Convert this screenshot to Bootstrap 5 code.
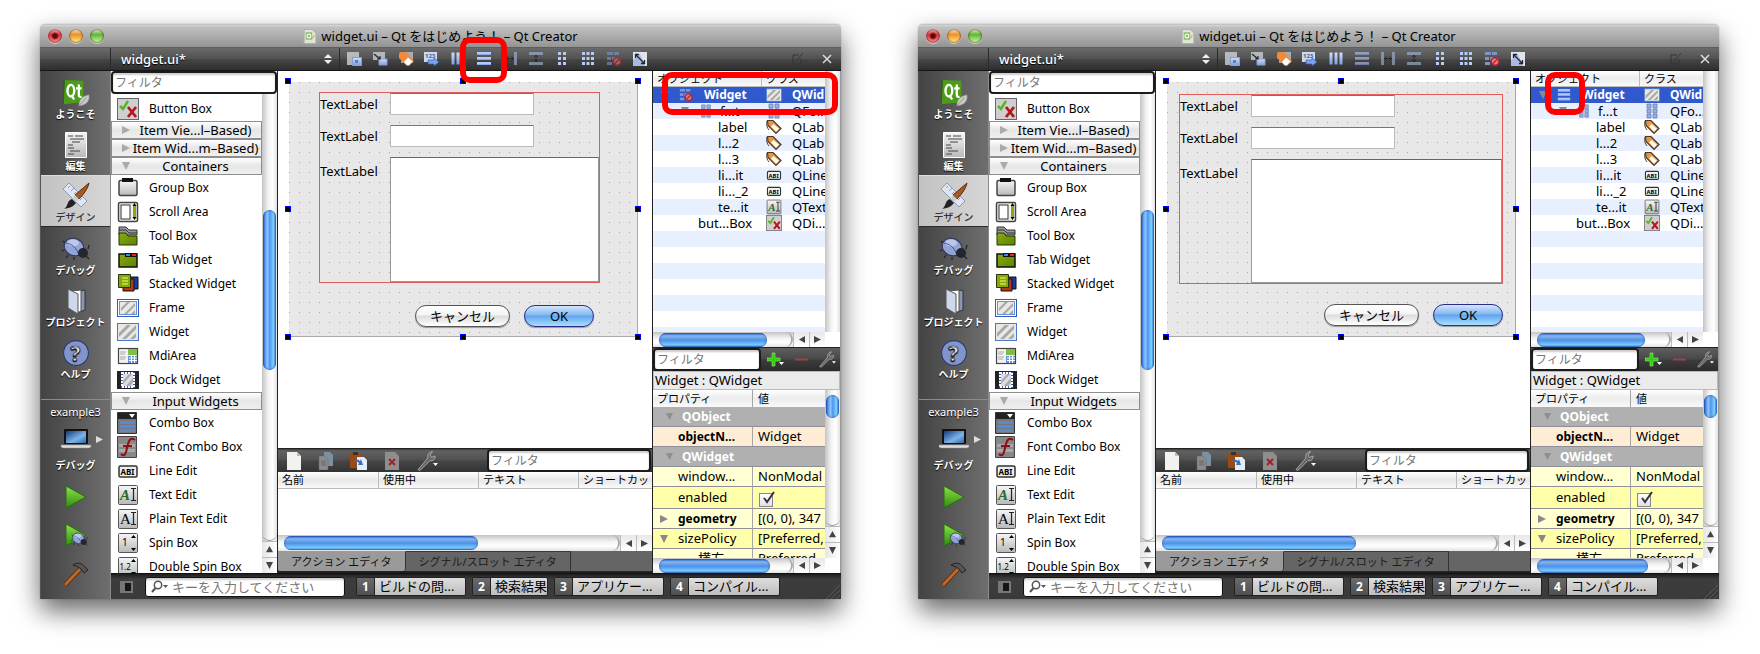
<!DOCTYPE html>
<html lang="ja">
<head>
<meta charset="utf-8">
<meta name="viewport" content="width=device-width, initial-scale=1">
<title>widget.ui - Qt Creator</title>
<link href="https://cdn.jsdelivr.net/npm/bootstrap@5.3.0/dist/css/bootstrap.min.css" rel="stylesheet">
<style>
body{font-family:"Noto Sans","Noto Sans CJK JP",sans-serif;font-size:12px;line-height:16px;color:#000;background:#fff;overflow:hidden}
.desk{padding:24px 41px 55px 40px;gap:77px;height:100vh}
.win{flex:1 1 0;min-width:0;border-radius:5px 5px 0 0;box-shadow:0 12px 26px rgba(0,0,0,.6),0 0 1px rgba(0,0,0,.5);background:#fff}
button,select,input,textarea{font:inherit;color:inherit;padding:0;border:0;background:none;border-radius:0}
svg{display:block;flex:none}
.titlebar{height:23px;font-size:13px;background:linear-gradient(#d6d6d6,#c0c0c0 10%,#949494);border-radius:5px 5px 0 0;border-top:1px solid #c4c4c4}
.lights{left:8px;top:4px;gap:7px}
.light{width:14px;height:14px;border-radius:50%;box-shadow:0 1px 0 #ccc,inset 0 0 1px 1px rgba(60,0,0,.4)}
.light.r{background:radial-gradient(circle at 50% 50%,#5b0a0d 0 2px,transparent 4px),linear-gradient(#f7b4b4,#dc353b 40%,#ff8e8a)}
.light.y{background:linear-gradient(#fdebc8,#ea922c 40%,#fff08a)}
.light.g{background:linear-gradient(#e0f6d0,#62b43a 40%,#ccffa0)}
.toolbar{height:24px;background:linear-gradient(#6a6a6a,#525252 48%,#464646 52%,#2e2e2e);border-bottom:1px solid #161616;border-top:1px solid #5e5e5e}
.corner{width:71px;border-right:1px solid #2a2a2a}
.filesel{appearance:none;color:#fff;font-size:13px;font-weight:500;padding-left:10px;text-shadow:0 1px 1px #000;line-height:22px}
.tools{gap:10px;padding-left:6px;border-left:1px solid #2a2a2a;margin-left:7px}
.modes{width:71px;background:linear-gradient(90deg,#434343,#6e6e6e);border-right:1px solid #8a8a8a;border-left:1px solid #555}
.mode{height:52px;color:#fff;font-size:10px;font-weight:700;line-height:14px;padding-bottom:2px;text-shadow:0 1px 1px #000;white-space:nowrap}
.mode.on{background:linear-gradient(90deg,#c2c2c2,#d6d6d6);color:#333;font-weight:500;text-shadow:none;border-top:1px solid #ddd;border-bottom:1px solid #2b2b2b}
.kit{border-top:1px solid #8b8b8b;margin-top:16px;color:#fff;font-size:11px;text-shadow:0 1px 1px #000}
.kit .lab{font-size:10px;font-weight:700;line-height:14px}
.wbox{width:167px;border-right:1px solid #222}
.filter{height:23px;border:2px solid #1c1c1c;border-radius:4px;background:#fff;font-size:12px;padding-left:2px;min-width:0;box-shadow:inset 0 2px 2px #ccc}
.filter::placeholder,.locator::placeholder{color:#777;opacity:1}
.items{overflow:hidden;padding-top:3px}
.item{height:24px;gap:10px;padding-left:6px;white-space:nowrap;width:100%}
.cat{height:18px;border:1px solid #8e8e8e;background:linear-gradient(#fff,#e6e6e6 50%,#efefef);font-size:13px;white-space:nowrap;line-height:16px;width:100%}
.cat .tri{width:18px;flex:none}
.cat.opened{margin-bottom:1px}
.vbar{width:15px;background:linear-gradient(90deg,#c4c4c4,#f2f2f2 40%,#fff 70%,#e2e2e2);flex:none}
.vthumb{border-radius:7px;margin:0 1px;background:linear-gradient(90deg,#1d55c0,#5c9dec 18%,#8cc4fb 35%,#4f96ee 52%,#7fd0ff 80%,#2c6cc6);box-shadow:inset 0 0 2px #123a9c}
.vbtn{height:16px;border-top:1px solid #bbb;background:linear-gradient(90deg,#e6e6e6,#fff);font-size:0}
.vtrack{border-radius:0 0 8px 8px;border-bottom:1px solid #999;min-height:0}
.hbar{height:16px;background:linear-gradient(#c4c4c4,#f2f2f2 40%,#fff 70%,#e2e2e2);flex:none}
.dock .hbar{height:15px}
.htrack{border-radius:0 8px 8px 0;border-right:2px solid #aaa;padding-left:6px}
.hthumb{border-radius:7px;height:14px;background:linear-gradient(#1f58c4,#86b4ee 20%,#5a9bea 45%,#4890ea 50%,#7ecbff 85%,#3a78c8);box-shadow:inset 0 0 2px #123a9c}
.hbtn{width:16px;border-left:1px solid #bbb;background:linear-gradient(#e8e8e8,#fff)}
.canvas{padding:11px 14px 0 11px;background:#fff}
.form{height:255px;background:radial-gradient(circle at .5px .5px,#a4a4a4 .8px,transparent .9px) 0 0/10px 10px #e8e8e8;border-right:1px solid #aaa;border-bottom:1px solid #aaa;font-size:13px}
.lay{display:grid;grid-template-columns:71px 1fr;grid-template-rows:22px 22px 1fr;row-gap:10px;border:1px solid #e05c5c}
.a .lay{margin:10px 37px 0 30px;height:191px}
.b .lay{margin:12px 12px 0 12px;height:190px}
.a .lay{grid-template-columns:70px 1fr}
.lay input{width:144px;height:22px;background:#fff;border:1px solid #bbb;border-top-color:#777}
.lay textarea{background:#fff;border:1px solid #999;border-top-color:#666;resize:none;width:100%;height:100%}
.lay label{line-height:22px}
.lay label.t{padding-top:3px}
.pill{height:22px;border-radius:11px;border:1px solid #555;background:linear-gradient(#fff,#f4f4f4 45%,#dcdcdc 50%,#fff);box-shadow:0 1px 1px #999;line-height:19px}
.cancel{width:95px}
.ok{width:70px;background:linear-gradient(#d4e6fb,#84b8f2 45%,#5fa5ee 50%,#a8e0ff);border-color:#2b2b8c}
.btns{gap:14px}
.a .btns{margin:22px 43px 0 0}
.b .btns{margin:20px 12px 0 0}
.grips{position:absolute;inset:-1px -1px -1px -1px;pointer-events:none}
.hd{width:6px;height:6px;background:#000;border:1px solid #00f;position:absolute;transform:translate(-50%,-50%)}
.abar{height:24px;background:linear-gradient(#3a3a3a,#626262 8%,#505050 48%,#454545 52%,#333);border-top:1px solid #222;gap:16px;padding:0 1px 0 8px}
.abar .filter{width:164px}
.ahead{height:17px;background:linear-gradient(#fff,#e8e8e8 50%,#fafafa);border-bottom:1px solid #bbb;font-size:11px;line-height:16px}
.ahead th{font-weight:400;padding:0 0 0 4px;border-left:1px solid #bbb;overflow:hidden;white-space:nowrap}
.ahead th:first-child{border-left:0}
table{table-layout:fixed;width:100%;border-collapse:separate;border-spacing:0}
.etabs{height:22px;background:#656565;font-size:11px;border-bottom:2px solid #222;color:#1c1c1c}
.etabs button{padding:0 13px;border-right:1px solid #333;border-top:1px solid #3a3a3a;line-height:18px;white-space:nowrap}
.etabs .on{background:#9a9a9a;border-radius:0 0 3px 3px;color:#111;border-top-color:#9a9a9a}
.dock{width:189px;border-left:1px solid #222;border-right:1px solid #999;flex:none}
.tree{height:261px;overflow:hidden;background:repeating-linear-gradient(#e8f0ff 0 16px,#fff 16px 32px)}
.tree th{height:16px;font-weight:400;font-size:11px;padding:0 0 0 4px;background:linear-gradient(#fff,#ececec 50%,#fafafa);border-bottom:1px solid #bbb;line-height:15px}
.tree th+th{border-left:1px solid #bbb}
.tree td{height:16px;padding:0;white-space:nowrap;overflow:hidden;font-size:13px;line-height:16px}
.tree .sel td{background:#3059cd;color:#fff;font-weight:700;font-size:12px}
.tree .klass{gap:9px;padding-left:4px}
.pbar{height:24px;background:linear-gradient(#5e5e5e,#484848 48%,#3c3c3c 52%,#2c2c2c);border-top:1px solid #222;gap:6px;padding-right:4px}
.pbar .filter{width:108px}
.cls{height:19px;background:#ebebeb;border:1px solid #bbb;font-size:13px;padding-left:1px;line-height:17px}
.props{overflow:hidden;min-height:0}
.props th,.props td{padding:0;white-space:nowrap;overflow:hidden;font-size:13px;line-height:19px;height:20px;border-bottom:1px solid #8f8f98}
.props th.h{font-size:11px;font-weight:400;height:17px;line-height:16px;padding-left:4px;background:linear-gradient(#fff,#ececec 50%,#fafafa);border-bottom:0}
.props td+td,.props th.h+th{border-left:1px solid #a5a5a5;padding-left:5px}
.props .grp td{background:#b0b0b0;color:#fff;font-weight:700;font-size:12px}
.props .l td{background:#ffffd2}.props .d td{background:#ffffaa}.props .o td{background:#ffecd5}
.props .b2{font-weight:700;font-size:12px}
.props .tall td{height:22px}
.chk{width:14px;height:14px;appearance:none;border:1px solid #888;background:linear-gradient(#fff,#e0e0e0);margin:3px 0 0 1px;position:relative;vertical-align:top}
.chk+svg{margin:-18px 0 0 3px;position:relative}
.status{height:26px;background:linear-gradient(#1e1e1e,#3d3d3d 20%,#3a3a3a);border-top:1px solid #111;padding:0 1px 0 9px;gap:6px}
.locbox{width:200px;height:20px;background:#fff;border:1px solid #111;border-radius:3px;padding-left:5px;box-shadow:inset 0 2px 2px #ccc;margin:0 5px 0 6px}
.locator{font-size:13px;min-width:0;line-height:18px}
.out{height:19px;border:1px solid #222;border-radius:2px;font-size:13px;line-height:17px;background:linear-gradient(#dedede,#bebebe);white-space:nowrap}
.out b{width:18px;background:linear-gradient(#6a6a6a,#505050);color:#fff;border-right:1px solid #222;font-size:12px}
.ring{position:absolute;border:6px solid #f00;border-radius:10px;z-index:5;pointer-events:none}
.ring.tb{inset:-14px -15px -16px -16px}
.a .ring.tr{left:9px;right:2px;top:1px;height:43px}
.b .ring.tr{left:14px;width:40px;top:1px;height:43px}
</style>
</head>
<body>
<svg width="0" height="0" class="position-absolute">
<defs>
<linearGradient id="gb" x2="0" y2="1"><stop stop-color="#cfe0fb"/><stop offset="1" stop-color="#7f9de0"/></linearGradient>
<linearGradient id="gg" x2="0" y2="1"><stop stop-color="#f6f6f6"/><stop offset="1" stop-color="#b8b8b8"/></linearGradient>
<linearGradient id="gr" x2="0" y2="1"><stop stop-color="#8fe04a"/><stop offset="1" stop-color="#2f8c10"/></linearGradient>
<linearGradient id="go" x2="1" y2="1"><stop stop-color="#8aab10"/><stop offset="1" stop-color="#5c8200"/></linearGradient>
<linearGradient id="gs" x2="1" y2="1"><stop stop-color="#123a78"/><stop offset=".6" stop-color="#7db4e6"/><stop offset="1" stop-color="#2b66ac"/></linearGradient>
<symbol id="doc" viewBox="0 0 12 14"><path d="M.5.5h8l3 3v10H.5z" fill="#dfe4d8" stroke="#b0b0b0"/><rect x="2" y="3" width="6" height="7" fill="#8fc070"/><circle cx="5" cy="6.500" r="1.800" fill="none" stroke="#fff"/><path d="M7 10l3-4" stroke="#d8b060" stroke-width="1.200"/></symbol>
<symbol id="spin" viewBox="0 0 8 12"><path d="M0 5l4-4 4 4zM0 7h8l-4 4z" fill="#eee"/></symbol>
<symbol id="t0" viewBox="0 0 16 16"><path d="M1 1h12v5H6v8H1z" fill="#d5d9e0" opacity=".75"/><path d="M6.500 6.500h9v8h-9z" fill="url(#gb)" stroke="#8aa0d0"/><path d="M9 9h3v3H9z" fill="#5f7cc8"/></symbol>
<symbol id="t1" viewBox="0 0 16 16"><path d="M1 1h12v8H1z" fill="#c9cdd4" opacity=".8"/><path d="M7 8h8v6H7z" fill="url(#gb)" stroke="#8aa0d0"/><path d="M2 3l6 5M8 5v3H5" stroke="#222" fill="none" stroke-width="1.200"/></symbol>
<symbol id="t2" viewBox="0 0 16 16"><path d="M3 1h12v11H3z" fill="#c9cdd4" opacity=".7"/><path d="M1 3l1-2h6l8 9-5 5H9L1 7z" fill="#f08a3c"/><path d="M10 6.500l4.500 4-3.500 3.500H8.500L6 11z" fill="#fff"/></symbol>
<symbol id="t3" viewBox="0 0 16 16"><path d="M0 1h13v10H0z" fill="#cfd8e8"/><text x="1" y="7" font-size="6" font-weight="700" fill="#4462a8">123</text><path d="M4 9h6V7l5 4-5 4v-2H4z" fill="#7ba4f0" stroke="#3459b0" stroke-width=".7"/></symbol>
<symbol id="cols" viewBox="0 0 16 16"><path d="M1.500 1.500h3v12h-3zM6.500 1.500h3v12h-3zM11.500 1.500h3v12h-3z" fill="url(#gb)"/></symbol>
<symbol id="rows" viewBox="0 0 16 16"><path d="M1 1h14v3H1zM1 6h14v3H1zM1 11h14v3H1z" fill="#b4cbfa"/><path d="M1 3h14v1H1zM1 8h14v1H1zM1 13h14v1H1z" fill="#8aa6e4"/></symbol>
<symbol id="t6" viewBox="0 0 16 16"><path d="M1 1h3v13H1zM12 1h3v13h-3z" fill="#a4b8e0"/><path d="M4 7.500h8M6.500 5.500L4.500 7.500l2 2M9.500 5.500l2 2-2 2" stroke="#111" fill="none"/></symbol>
<symbol id="t7" viewBox="0 0 16 16"><path d="M1 1h14v3H1zM1 11h14v3H1z" fill="#a4b8e0"/><path d="M8 4v7M6 6l2-2 2 2M6 9l2 2 2-2" stroke="#111" fill="none"/></symbol>
<symbol id="t8" viewBox="0 0 16 16"><path d="M4 1h3v3H4zM9 1h3v3H9zM4 6h3v3H4zM9 6h3v3H9zM4 11h3v3H4zM9 11h3v3H9z" fill="#b4cbfa"/></symbol>
<symbol id="fl" viewBox="0 0 16 16"><path d="M3 1h4v4H3zM9 1h4v4H9zM3 6h4v4H3zM9 6h4v4H9zM3 11h4v4H3zM9 11h4v4H9z" fill="#98b0e4" stroke="#6a7fae" stroke-width=".8"/></symbol>
<symbol id="t9" viewBox="0 0 16 16"><path d="M2 1h3v3H2zM6.500 1h3v3h-3zM11 1h3v3h-3zM2 6h3v3H2zM6.500 6h3v3h-3zM11 6h3v3h-3zM2 11h3v3H2zM6.500 11h3v3h-3zM11 11h3v3h-3z" fill="#b4cbfa"/></symbol>
<symbol id="brk" viewBox="0 0 16 16"><path d="M1 1h6v3H1zM8 1h5v3H8zM1 6h4v3H1zM6 6h4v3H6zM1 11h5v3H1z" fill="#7f94cc"/><circle cx="11" cy="10.500" r="3.800" fill="#c88" stroke="#c22030" stroke-width="1.600"/><path d="M8.500 13l5-5" stroke="#c22030" stroke-width="1.500"/></symbol>
<symbol id="t11" viewBox="0 0 16 16"><path d="M1 1h14v14H1z" fill="#a9bbe0"/><path d="M7 1h8v14h-2z" fill="#e0e4ea"/><path d="M1 1h9L1 9z" fill="#dce6fa"/><path d="M3.500 3.500l9 9M3.500 7V3.500H7M12.500 9v3.500H9" stroke="#223" fill="none" stroke-width="1.300"/></symbol>
<symbol id="bb" viewBox="0 0 22 22"><rect x=".5" y=".5" width="21" height="21" fill="#cfcfcf" stroke="#666"/><path d="M3 8l3 3 5-8" stroke="#58b52c" stroke-width="2.500" fill="none"/><path d="M11 9l8 10M19 9l-8 10" stroke="#b3161c" stroke-width="2.800"/></symbol>
<symbol id="gbx" viewBox="0 0 22 22"><rect x="2" y="3.500" width="18" height="15" rx="1.500" fill="url(#gg)" stroke="#444" stroke-width="1.500"/><path d="M5 1h11v4H5z" fill="#111"/></symbol>
<symbol id="sca" viewBox="0 0 22 22"><rect x="1.500" y="1.500" width="19" height="19" rx="1.500" fill="#f0f0f0" stroke="#444" stroke-width="1.500"/><rect x="4" y="4" width="9" height="14" fill="#fff" stroke="#333"/><path d="M16 5h3v11h-3z" fill="#84a81a"/><path d="M15.500 5l2-3 2 3zM15.500 16l2 3 2-3z"/></symbol>
<symbol id="tbx" viewBox="0 0 22 22"><path d="M2 2h7l3 3h8v5H2z" fill="#999" stroke="#333"/><path d="M2 5h7l3 3h8" fill="none" stroke="#333"/><path d="M2 8h7l2 3h9v9H2z" fill="url(#go)" stroke="#26350a"/></symbol>
<symbol id="tab" viewBox="0 0 22 22"><path d="M2 5h18v13H2z" fill="url(#go)" stroke="#111" stroke-width="1.500"/><path d="M8 4h12v4H8z" fill="#111"/><path d="M9 5h4v2H9z" fill="#38f"/><path d="M15 5h4v2h-4z" fill="#e22"/></symbol>
<symbol id="stk" viewBox="0 0 22 22"><path d="M10 4h11v12H10z" fill="#1c3ca0" stroke="#111"/><path d="M6 6h11v12H6z" fill="#b03a10" stroke="#111"/><path d="M1.500 1.500h12v13h-12z" fill="#86a80c" stroke="#26350a"/><path d="M5 5h6M5 8h6M5 11h6" stroke="#ef6"/></symbol>
<symbol id="frm" viewBox="0 0 22 22"><rect x=".5" y="2.500" width="21" height="17" fill="#fff" stroke="#2e5cb8"/><rect x="2.500" y="4.500" width="17" height="13" fill="#e8e8e4" stroke="#6a90d8"/><path d="M4 11l6-6h3L4 14zM7 17L18 6v3l-8 8zM14 17l4-4v4z" fill="#a8a8a4"/></symbol>
<symbol id="wg" viewBox="0 0 22 22"><rect x=".5" y="2.500" width="21" height="17" fill="#e8e8e4" stroke="#4a78c8"/><path d="M2 12l8-8h4L2 16zM5 18L19 4v4L9 18zM13 18l6-6v4l-2 2z" fill="#a8a8a4"/></symbol>
<symbol id="mdi" viewBox="0 0 22 22"><rect x="1.500" y="3.500" width="19" height="15" fill="#f2f2f2" stroke="#444" stroke-width="1.200"/><path d="M11 4h9v6h-9z" fill="#7fbc4a"/><path d="M11 11h9v7h-9z" fill="#6a90d8"/><path d="M12 13h8M12 15.500h8M14.500 11v7M17.500 11v7" stroke="#fff"/><path d="M3 7h6M3 9h5M3 12h6M3 14h5" stroke="#aaa"/></symbol>
<symbol id="dck" viewBox="0 0 22 22"><path d="M0 2h22v18H0z" fill="#222"/><rect x="5" y="4" width="12" height="14" fill="#ddd" stroke="#3b62b8" stroke-width="2"/><rect x="5" y="4" width="12" height="14" fill="none" stroke="#fff" stroke-width="2" stroke-dasharray="2 1"/><path d="M6 12l6-7h3L6 15zM9 17l7-8v4l-3 4z" fill="#aaa"/></symbol>
<symbol id="cmb" viewBox="0 0 22 22"><path d="M.5.5h19v21H.5z" fill="#777" stroke="#333"/><path d="M1 1h18v6H1z" fill="#222"/><path d="M12 2h6l-3 4z" fill="#fff"/><path d="M3 9h15v3H3zM3 13h15v3H3zM3 17h15v3H3z" fill="#5c88cc"/></symbol>
<symbol id="fcb" viewBox="0 0 22 22"><path d="M.5.5h19v21H.5z" fill="#888" stroke="#444"/><path d="M2 8h16v3H2zM2 13h16v3H2z" fill="#aaa"/><path d="M18 4c-4-3-6 0-7 4l-2 8c-1 4-3 4-5 2M6 10h9" fill="none" stroke="#8c0f14" stroke-width="2"/></symbol>
<symbol id="led" viewBox="0 0 22 22"><rect x="2" y="6" width="18" height="11" rx="1.500" fill="#eee" stroke="#333" stroke-width="1.500"/><text x="3.500" y="14.500" font-size="8" font-weight="700">ABI</text></symbol>
<symbol id="ted" viewBox="0 0 22 22"><rect x="1.500" y="1.500" width="19" height="19" rx="1" fill="url(#gg)" stroke="#555"/><text x="3" y="16" font-size="15" font-family="Liberation Serif,serif" font-style="italic" font-weight="700" fill="#2c6a2c">A</text><path d="M14 4.500h5M14 16.500h5M16.500 5v11" stroke="#222" stroke-width="1.200"/></symbol>
<symbol id="ped" viewBox="0 0 22 22"><rect x="1.500" y="1.500" width="19" height="19" rx="1" fill="url(#gg)" stroke="#555"/><text x="3" y="16" font-size="15" font-family="Liberation Serif,serif">A</text><path d="M14 4.500h5M14 16.500h5M16.500 5v11" stroke="#222" stroke-width="1.200"/></symbol>
<symbol id="sp1" viewBox="0 0 22 22"><rect x="1.500" y="1.500" width="19" height="19" rx="1" fill="url(#gg)" stroke="#555"/><text x="5" y="14" font-size="10">1</text><path d="M14 6l2.500-3L19 6zM14 16l2.500 3 2.500-3z"/></symbol>
<symbol id="sp2" viewBox="0 0 22 22"><rect x="1.500" y="1.500" width="19" height="19" rx="1" fill="url(#gg)" stroke="#555"/><text x="2.500" y="14" font-size="8">1.2</text><path d="M14 6l2.500-3L19 6zM14 16l2.500 3 2.500-3z"/></symbol>
<symbol id="lbl" viewBox="0 0 16 16"><path d="M1.500 1.500h5.500l8 8-5 5-8-8z" fill="#e8953c" stroke="#4a3a2a" stroke-width="1.200"/><path d="M7.500 5L13 9.700 10 12.700 5 7.500z" fill="#fff"/><path d="M1 2c-1 3 0 7 2 9" fill="none" stroke="#444"/></symbol>
<symbol id="qt" viewBox="0 0 30 30"><path d="M3 1l20 1v23L1 27z" fill="#4c9c18"/><path d="M3 1L1 3v23l1 1z" fill="#2c640c"/><ellipse cx="9.500" cy="12.500" rx="3.600" ry="6.200" fill="none" stroke="#fff" stroke-width="2.600"/><path d="M10 17l3 5M18 6v11c0 2 1 2.500 3 2M15 10h6" fill="none" stroke="#fff" stroke-width="2.400"/><path d="M18 29c0-7 4-11 11-12 1 7-3 11-11 12z" fill="#c9c9c9" stroke="#888" stroke-width=".6"/><path d="M18 29l8-9" stroke="#777" stroke-width=".7"/></symbol>
<symbol id="ed" viewBox="0 0 26 28"><path d="M2.500 1.500h21v25h-21z" fill="url(#gg)" stroke="#fff"/><path d="M5 5h5M12 5h8M7 8h14M9 11h8M5 14h5M5 17h6M7 20h10M5 23h6" stroke="#444"/></symbol>
<symbol id="ds" viewBox="0 0 30 28"><path d="M2 7l6-6 18 18-6 6z" fill="#dfe6f2" stroke="#8e9ab4"/><path d="M7 6l2-2M10 9l3-3M13 12l2-2M16 15l3-3M19 18l2-2" stroke="#8e9ab4"/><path d="M28 1L14 13l4 4C23 12 27 6 28 1z" fill="#a85a1e" stroke="#5c2c0a"/><path d="M14 13l4 4-3 3-4-3z" fill="#ccc"/><path d="M11 17l4 4c-3 4-7 5-12 6 4-2 3-9 8-10z" fill="#222"/></symbol>
<symbol id="bug" viewBox="0 0 30 28"><path d="M4 8l-2-2M3 15l-2 1M7 20l-2 3M13 22v3M27 14l1-4M25 21l3 3" stroke="#222" stroke-width="1.200"/><ellipse cx="13" cy="12" rx="10" ry="8.500" transform="rotate(25 13 12)" fill="#92a3d6" stroke="#27335c"/><ellipse cx="12" cy="8" rx="6" ry="3.500" fill="#c6d0f0" opacity=".8"/><path d="M5 8c5 1 11 4 13 13" stroke="#27335c" fill="none" stroke-width=".7"/><ellipse cx="22" cy="18" rx="5" ry="5" fill="#23262e"/></symbol>
<symbol id="prj" viewBox="0 0 26 28"><path d="M9 5l13-2v20l-8 3z" fill="#8a95b4" stroke="#333"/><path d="M7 4l11-1v21l-6 3z" fill="#fff" stroke="#555"/><path d="M5 2l10 5v20L5 21z" fill="#cfd7ea" stroke="#555"/></symbol>
<symbol id="hlp" viewBox="0 0 26 26"><circle cx="13" cy="13" r="11.500" fill="#8294cc" stroke="#2c3a6a"/><text x="8" y="20" font-size="19" font-weight="700" fill="#fff" stroke="#333" stroke-width=".5">?</text></symbol>
<symbol id="lap" viewBox="0 0 32 22"><rect x="4" y="1" width="24" height="15" rx="1" fill="#111"/><rect x="6" y="3" width="20" height="12" fill="url(#gs)"/><path d="M1 17h30v2l-2 1H3l-2-1z" fill="#ddd" stroke="#888" stroke-width=".5"/></symbol>
<symbol id="run" viewBox="0 0 26 26"><path d="M3 2l20 11L3 24z" fill="url(#gr)" stroke="#2a6a10"/></symbol>
<symbol id="ham" viewBox="0 0 28 28"><path d="M3 25L19 8" stroke="#5a2808" stroke-width="4.500"/><path d="M3 25L19 8" stroke="#c0682c" stroke-width="2.800"/><path d="M11 5c5-3 9-2 12 2l3 3-4 3-3-4-3-2z" fill="#555" stroke="#222"/></symbol>
<symbol id="newf" viewBox="0 0 16 18"><path d="M1 0h10l4 4v14H1z" fill="#f2f2ee"/><path d="M11 0v4h4z" fill="#bbb"/></symbol>
<symbol id="cpy" viewBox="0 0 16 18"><path d="M6 0h6l3 3v11H6z" fill="#7c8fa4"/><path d="M1 4h6l3 3v11H1z" fill="#8c8c8c" stroke="#666" stroke-width=".5"/><path d="M3 9h5M3 11h5M3 13h5" stroke="#666"/></symbol>
<symbol id="pst" viewBox="0 0 18 18"><path d="M0 1h11v15H0z" fill="#9a4a10"/><path d="M3 0h5v3H3z" fill="#333"/><path d="M7 5h7l3 3v10H7z" fill="#e4ecf6"/><path d="M3 11c2-4 5-4 7-2l1-2 2 6-5 0 1-2c-2-2-4-1-6 0z" fill="#3b6ec0"/></symbol>
<symbol id="del" viewBox="0 0 16 18"><path d="M1 0h10l4 4v14H1z" fill="#8e8e8c"/><path d="M5 7l6 6M11 7l-6 6" stroke="#9c2430" stroke-width="2"/></symbol>
<symbol id="wr" viewBox="0 0 22 20"><path d="M2 18.500L12 7c-1-3 1-6 4.500-6.500L14 4l1.500 2.500L19 5c.5 3-2 5.500-5 4.500L4 19.500z" fill="#666" stroke="#bbb" stroke-width=".8"/><path d="M17 12h5l-2.500 3z" fill="#fff"/></symbol>
<symbol id="pls" viewBox="0 0 18 16"><path d="M5 1h3v5h5v3H8v5H5V9H0V6h5z" fill="#38c818" stroke="#8ff06a" stroke-width=".6"/><path d="M12 10h5l-2.500 3z" fill="#fff"/></symbol>
</defs></svg>
<main class="desk d-flex" id="desk"></main>
<script>
const ic=(n,w,h=w,o='')=>`<svg width="${w}" height="${h}" aria-hidden="true"${o}><use href="#${n}"/></svg>`;
const tri=(d,c='#999',s=8)=>({r:`<svg width="${s}" height="${s}" viewBox="0 0 8 8"><path d="M0 0l8 4-8 4z" fill="${c}"/></svg>`,d:`<svg width="${s}" height="${s}" viewBox="0 0 8 8"><path d="M0 0h8L4 8z" fill="${c}"/></svg>`,l:`<svg width="${s}" height="${s}" viewBox="0 0 8 8"><path d="M8 0v8L1 4z" fill="${c}"/></svg>`,u:`<svg width="${s}" height="${s}" viewBox="0 0 8 8"><path d="M0 7h8L4 0z" fill="${c}"/></svg>`})[d];
const item=([i,t])=>`<button class="item d-flex align-items-center">${ic(i,22)}<span>${t}</span></button>`;
const cat=(t,open)=>`<button class="cat d-flex align-items-center${open?' opened':''}"><span class="tri d-flex justify-content-end">${tri(open?'d':'r','#aaa')}</span><span class="flex-grow-1 text-center">${t}</span></button>`;
const vbar=(top,len)=>`<div class="vbar d-flex flex-column"><div class="vtrack flex-grow-1"><div style="height:${top}%"></div><div class="vthumb" style="height:${len}%"></div></div><div class="vbtn d-flex align-items-center justify-content-center">${tri('u','#444',7)}</div><div class="vbtn d-flex align-items-center justify-content-center">${tri('d','#444',7)}</div></div>`;
const hbar=(len,corner)=>`<div class="hbar d-flex"><div class="htrack flex-grow-1 d-flex align-items-center"><div class="hthumb" style="width:${len}%"></div></div><div class="hbtn d-flex align-items-center justify-content-center">${tri('l','#444',7)}</div><div class="hbtn d-flex align-items-center justify-content-center">${tri('r','#444',7)}</div>${corner?'<div class="bg-white" style="width:15px"></div>':''}</div>`;
const mode=([i,t,on])=>`<button class="mode d-flex flex-column align-items-center justify-content-end${on?' on':''}">${ic(i,30,28)}<span>${t}</span></button>`;
const trow=([pad,arrow,icon,name,ci,cls,sel])=>`<tr${sel?' class="sel"':''}><td><div class="d-flex align-items-center" style="padding-left:${pad}px">${arrow?tri('d','#8a8a8a')+`<span class="d-flex" style="padding:0 ${sel?11:7}px 0 10px">${ic(icon,14)}</span>`:''}<span>${name}</span></div></td><td><div class="klass d-flex align-items-center">${ic(ci,18,16)}<span>${cls}</span></div></td></tr>`;
const out=(n,t,w)=>`<button class="out d-flex p-0" style="width:${w}px"><b class="text-center flex-shrink-0">${n}</b><span class="ps-1">${t}</span></button>`;
const grp=g=>`<tr class="grp"><td colspan="2"><div class="d-flex align-items-center" style="padding-left:13px;gap:9px">${tri('d','#8e8e8e',7)}<span>${g}</span></div></td></tr>`;
function win(v){
 const tools=['t0','t1','t2','t3','cols','rows','t6','t7','t8','t9','brk','t11'].map((n,i)=>{
  const dim=(v=='b'&&n=='rows')||n=='t6'||n=='t7'||(v=='a'&&n=='brk');
  return `<button class="position-relative" aria-label="tool ${i+1}">${ic(n,16,16,dim?' opacity=".6"':'')}${v=='a'&&n=='rows'?'<span class="ring tb"></span>':''}</button>`}).join('');
 const hs=[[0,0],[50,0],[100,0],[0,50],[100,50],[0,100],[50,100],[100,100]].map(p=>`<i class="hd" style="left:${p[0]}%;top:${p[1]}%"></i>`).join('');
 return `<section class="win d-flex flex-column ${v}">
 <header class="titlebar position-relative d-flex align-items-center justify-content-center gap-1 flex-shrink-0">
  <div class="lights position-absolute d-flex"><button class="light r" aria-label="close"></button><button class="light y" aria-label="minimize"></button><button class="light g" aria-label="zoom"></button></div>
  ${ic('doc',14,15)}<span>widget.ui – Qt をはじめよう！ – Qt Creator</span></header>
 <div class="toolbar d-flex align-items-stretch flex-shrink-0"><div class="corner flex-shrink-0"></div>
  <div class="d-flex align-items-center" style="width:221px"><select class="filesel flex-grow-1" aria-label="file"><option>widget.ui*</option></select>${ic('spin',8,12)}</div>
  <div class="tools d-flex align-items-center flex-grow-1">${tools}</div>
  <div class="d-flex align-items-center gap-3 pe-2"><svg width="14" height="14"><path d="M8 3H2v9h8V7M6 8l6-7" stroke="#353535" fill="none"/></svg><button aria-label="close file"><svg width="12" height="12"><path d="M2 2l8 8M10 2l-8 8" stroke="#ddd" stroke-width="1.500"/></svg></button></div></div>
 <div class="d-flex flex-grow-1" style="min-height:0">
  <nav class="modes d-flex flex-column flex-shrink-0">
   ${[['qt','ようこそ'],['ed','編集'],['ds','デザイン',1],['bug','デバッグ'],['prj','プロジェクト'],['hlp','ヘルプ']].map(mode).join('')}
   <div class="kit d-flex flex-column align-items-center pt-1 flex-grow-1"><span>example3</span>
    <button class="d-flex align-items-center position-relative mt-2">${ic('lap',32,22)}<span class="position-absolute start-100 ps-1">${tri('r','#ddd',7)}</span></button><span class="lab mt-2">デバッグ</span>
    <button class="mt-2 pt-1" aria-label="run">${ic('run',26)}</button><button class="mt-2 pt-1 position-relative" aria-label="debug">${ic('run',26)}<span class="position-absolute bottom-0 end-0">${ic('bug',19,17)}</span></button><button class="mt-2 pt-1" aria-label="build">${ic('ham',28)}</button></div>
  </nav>
  <div class="d-flex flex-column flex-grow-1" style="min-width:0">
   <div class="d-flex flex-grow-1" style="min-height:0">
    <aside class="wbox d-flex flex-column flex-shrink-0"><input class="filter w-100" placeholder="フィルタ" aria-label="widget filter">
     <div class="d-flex flex-grow-1" style="min-height:0"><div class="items flex-grow-1">
      ${item(['bb','Button Box'])}${cat('Item Vie...l–Based)')}${cat('Item Wid...m–Based)')}${cat('Containers',1)}
      ${[['gbx','Group Box'],['sca','Scroll Area'],['tbx','Tool Box'],['tab','Tab Widget'],['stk','Stacked Widget'],['frm','Frame'],['wg','Widget'],['mdi','MdiArea'],['dck','Dock Widget']].map(item).join('')}
      ${cat('Input Widgets',1)}
      ${[['cmb','Combo Box'],['fcb','Font Combo Box'],['led','Line Edit'],['ted','Text Edit'],['ped','Plain Text Edit'],['sp1','Spin Box'],['sp2','Double Spin Box']].map(item).join('')}
     </div>${vbar(26,36)}</div></aside>
    <div class="d-flex flex-column flex-grow-1" style="min-width:0">
     <div class="canvas flex-grow-1"><div class="form position-relative"><div class="d-flex flex-column">
       <div class="lay"><label for="${v}1">TextLabel</label><input id="${v}1"><label for="${v}2">TextLabel</label><input id="${v}2"><label class="t" for="${v}3">TextLabel</label><textarea id="${v}3"></textarea></div>
       <div class="btns d-flex justify-content-end"><button class="pill cancel">キャンセル</button><button class="pill ok">OK</button></div></div><div class="grips">${hs}</div></div></div>
     <div class="abar d-flex align-items-center flex-shrink-0"><button aria-label="new">${ic('newf',16,18)}</button><button aria-label="copy">${ic('cpy',16,18)}</button><button aria-label="paste">${ic('pst',18)}</button><button aria-label="delete">${ic('del',16,18)}</button><button aria-label="configure">${ic('wr',22,20)}</button><input class="filter ms-auto" placeholder="フィルタ" aria-label="action filter"></div>
     <table class="ahead"><thead><tr><th style="width:100px">名前</th><th style="width:100px">使用中</th><th style="width:100px">テキスト</th><th>ショートカット</th></tr></thead></table>
     <div class="bg-white" style="height:46px"></div>
     ${hbar(58)}
     <div class="etabs d-flex flex-shrink-0"><button class="on">アクション エディタ</button><button>シグナル/スロット エディタ</button></div>
    </div>
    <aside class="dock d-flex flex-column position-relative">
     <div class="d-flex flex-shrink-0"><div class="tree flex-grow-1"><table><thead><tr><th style="width:108px">オブジェクト</th><th>クラス</th></tr></thead><tbody>
      ${[[8,1,v=='a'?'brk':'rows','Widget','wg','QWid',1],[28,1,'fl','f...t','fl','QFo...'],[65,0,0,'label','lbl','QLab'],[65,0,0,'l...2','lbl','QLab'],[65,0,0,'l...3','lbl','QLab'],[65,0,0,'li...it','led','QLine'],[65,0,0,'li..._2','led','QLine'],[65,0,0,'te...it','ted','QText'],[45,0,0,'but...Box','bb','QDi...']].map(trow).join('')}
      </tbody></table></div><div class="vbar"></div></div>
     ${hbar(82,1)}
     <div class="pbar d-flex align-items-center flex-shrink-0"><input class="filter" placeholder="フィルタ" aria-label="property filter"><div class="d-flex flex-grow-1 justify-content-between align-items-center"><button aria-label="add">${ic('pls',18,16)}</button><button aria-label="remove"><svg width="13" height="4"><path d="M0 .5h13v2H0z" fill="#9c4444"/></svg></button><button aria-label="options">${ic('wr',18,17)}</button></div></div>
     <div class="cls flex-shrink-0">Widget : QWidget</div>
     <div class="d-flex flex-grow-1" style="min-height:0"><div class="props flex-grow-1"><table><thead><tr><th class="h" style="width:99px">プロパティ</th><th class="h">値</th></tr></thead><tbody>
      ${grp('QObject')}
      <tr class="o"><td class="b2" style="padding-left:25px">objectN...</td><td>Widget</td></tr>${grp('QWidget')}
      <tr class="l"><td style="padding-left:25px">window...</td><td>NonModal</td></tr>
      <tr class="d tall"><td style="padding-left:25px">enabled</td><td><input type="checkbox" class="chk" checked aria-label="enabled"><svg width="14" height="14"><path d="M3 7l3 4 7-10" stroke="#333" stroke-width="2" fill="none"/></svg></td></tr>
      <tr class="l"><td class="b2"><div class="d-flex align-items-center" style="padding-left:7px;gap:10px">${tri('r','#888')}geometry</div></td><td>[(0, 0), 347</td></tr>
      <tr class="d"><td><div class="d-flex align-items-center" style="padding-left:7px;gap:10px">${tri('d','#888')}sizePolicy</div></td><td>[Preferred,</td></tr>
      <tr class="l"><td style="padding-left:45px">横方</td><td>Preferred</td></tr>
      </tbody></table></div>${vbar(4,17)}</div>
     ${hbar(84,1)}
     <span class="ring tr"></span>
    </aside>
   </div>
   <footer class="status d-flex align-items-center flex-shrink-0"><button aria-label="sidebar"><svg width="13" height="12"><path d="M0 0h13v12H0z" fill="#777"/><path d="M5 2h6v8H5z" fill="#161616"/></svg></button>
    <label class="locbox d-flex align-items-center gap-1"><svg width="17" height="13" class="flex-shrink-0"><circle cx="7" cy="5" r="3.700" fill="none" stroke="#555" stroke-width="1.500"/><path d="M4.500 8L1 12" stroke="#555" stroke-width="2"/><path d="M12 5h5l-2.500 3z" fill="#555"/></svg><input class="locator flex-grow-1" placeholder="キーを入力してください" aria-label="locator"></label>
    ${out(1,'ビルドの問...',110)}${out(2,'検索結果',76)}${out(3,'アプリケー...',110)}${out(4,'コンパイル...',110)}
    <svg width="14" height="14" class="ms-auto align-self-end"><path d="M0 14L14 0M5 14l9-9M10 14l4-4" stroke="#666" stroke-width=".7"/></svg></footer>
  </div>
 </div></section>`}
document.getElementById('desk').innerHTML=win('a')+win('b');
</script>
<script src="https://cdn.jsdelivr.net/npm/bootstrap@5.3.0/dist/js/bootstrap.bundle.min.js"></script>
</body>
</html>
